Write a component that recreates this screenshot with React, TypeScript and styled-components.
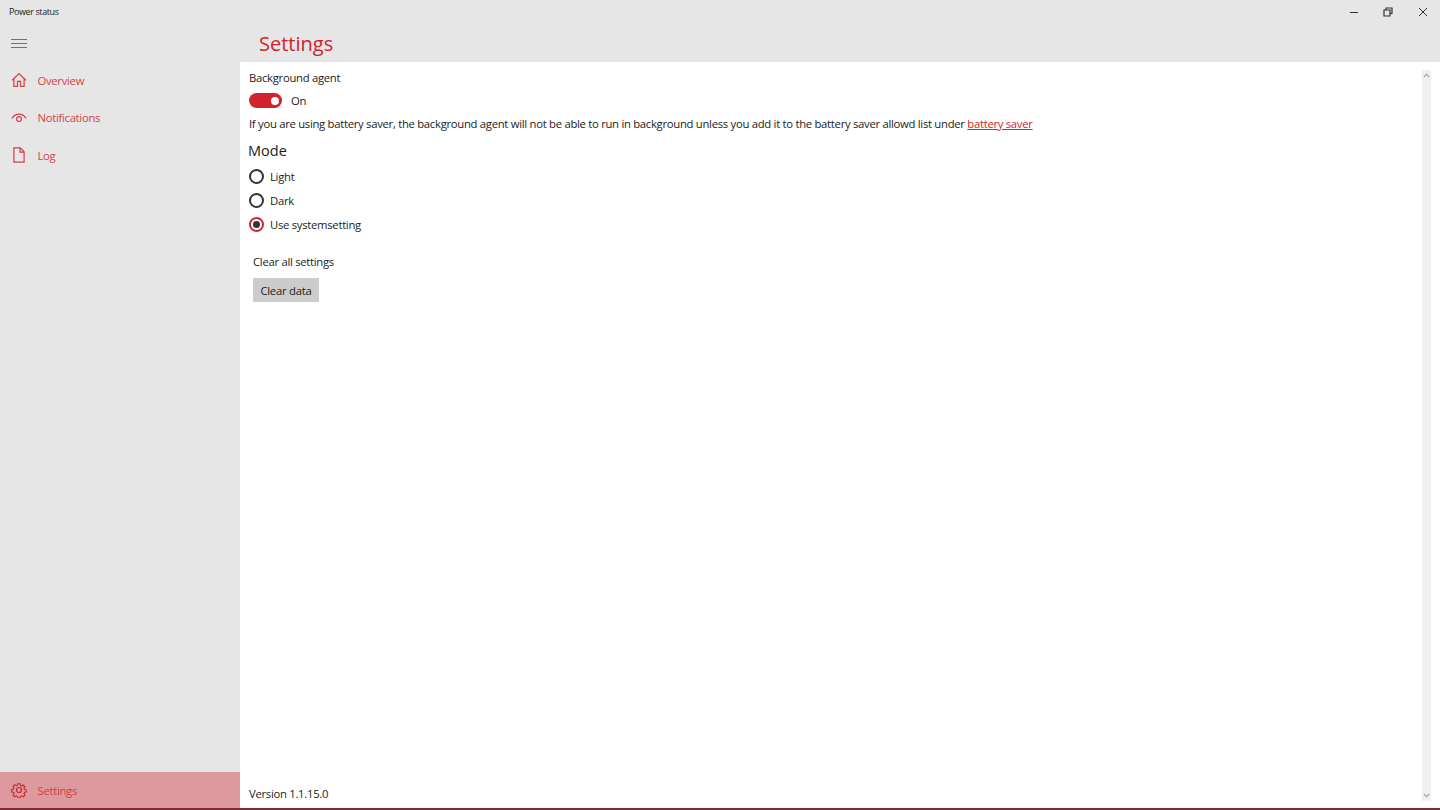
import React from "react";
import styled, { createGlobalStyle } from "styled-components";

const Global = createGlobalStyle`
  html, body { margin: 0; padding: 0; background: #e6e6e6; }
  * { box-sizing: border-box; }
  body { font-family: "Open Sans", "Noto Sans", "Liberation Sans", sans-serif; }
`;

const RED = "#d0232d";

const Shell = styled.div`
  width: 1440px; height: 810px; display: flex; flex-direction: column;
  background: #e6e6e6; overflow: hidden; border-bottom: 2px solid #7d2a33;
`;
const TitleBar = styled.header`
  height: 24px; flex: none; display: flex; align-items: center; justify-content: space-between;
  padding-left: 9px;
`;
const AppName = styled.span` font-size: 9px; color: #222; letter-spacing: -0.4px; margin-top: -1px; `;
const WindowButtons = styled.div` display: flex; `;
const WindowButton = styled.div`
  width: 34.5px; height: 24px; display: flex; align-items: center; justify-content: center;
`;
const Body = styled.div` flex: 1; display: flex; min-height: 0; `;
const Sidebar = styled.nav` width: 240px; flex: none; display: flex; flex-direction: column; `;
const Hamburger = styled.div`
  height: 38px; flex: none; padding: 2px 0 0 11px; display: flex; align-items: center;
`;
const NavItems = styled.div` flex: 1; margin-top: -0.6px; `;
const NavItem = styled.div<{ $selected?: boolean }>`
  height: 37.6px; display: flex; align-items: center; gap: 10.5px; padding-left: 11px;
  color: ${RED}; opacity: 0.85; font-size: 11.3px; letter-spacing: -0.3px;
  ${(p) => p.$selected && "background: #dc9a9e; opacity: 1; height: 36px; color: #d43a43;"}
`;
const Main = styled.main` flex: 1; display: flex; flex-direction: column; min-width: 0; `;
const PageHeader = styled.div` height: 38px; flex: none; padding: 6px 0 0 19px; `;
const PageTitle = styled.h1`
  margin: 0; font-size: 20px; line-height: 28px; font-weight: 400; color: ${RED};
`;
const Content = styled.div`
  flex: 1; background: #fff; display: flex; min-height: 0; padding: 7px 9px 0 9px;
`;
const Column = styled.div` flex: 1; display: flex; flex-direction: column; min-width: 0; `;
const Text = styled.div`
  font-size: 11.3px; line-height: 17px; color: #222; white-space: nowrap; letter-spacing: -0.29px;
`;
const ToggleRow = styled.div` display: flex; align-items: center; gap: 9px; margin-top: 5.5px; height: 18px; `;
const Toggle = styled.div`
  width: 33px; height: 15px; border-radius: 8px; background: ${RED}; display: flex; align-items: center;
  justify-content: flex-end; padding-right: 3.5px;
`;
const Knob = styled.div` width: 8px; height: 8px; border-radius: 50%; background: #fff; `;
const Notice = styled(Text)` margin-top: 5.5px; `;
const BatteryLink = styled.a` color: ${RED}; text-decoration: underline; `;
const SectionTitle = styled.h2`
  margin: 8px 0 0 -1px; font-size: 14.5px; line-height: 22px; font-weight: 400; color: #1c1c1c;
`;
const RadioGroup = styled.div` display: flex; flex-direction: column; margin-top: 2px; `;
const RadioRow = styled.label` height: 24px; display: flex; align-items: center; gap: 6px; `;
const RadioCircle = styled.span<{ $checked?: boolean }>`
  width: 15px; height: 15px; border-radius: 50%; flex: none; display: flex; align-items: center; justify-content: center;
  border: 2px solid ${(p) => (p.$checked ? RED : "#333")};
`;
const RadioDot = styled.span` width: 7px; height: 7px; border-radius: 50%; background: #333; flex: none; `;
const ClearSection = styled.section` margin: 17px 0 0 4px; display: flex; flex-direction: column; align-items: flex-start; `;
const ClearButton = styled.button`
  margin-top: 8px; width: 66px; height: 24px; border: none; padding: 0; background: #cccccc;
  font: inherit; font-size: 11.3px; letter-spacing: -0.24px; color: #222;
`;
const Version = styled(Text)` margin-top: auto; margin-bottom: 6px; `;
const ScrollBar = styled.div`
  width: 9px; flex: none; margin: 1px 0 7px 0; background: #f0f0f0; display: flex; flex-direction: column;
  justify-content: space-between; align-items: center; padding: 3px 0;
`;

const Chevron = ({ down }: { down?: boolean }) => (
  <svg width="7" height="5" viewBox="0 0 7 5" fill="none" stroke="#a8a8a8" strokeWidth="1.3">
    <path d={down ? "M.8 1l2.7 2.6L6.2 1" : "M.8 4l2.7-2.6L6.2 4"} />
  </svg>
);

const iconProps = { width: 16, height: 16, viewBox: "0 0 16 16", fill: "none", stroke: RED, strokeWidth: 1.2 };

const NavIcon = ({ name }: { name: string }) => {
  if (name === "home")
    return (
      <svg {...iconProps}>
        <path d="M1.2 8.3L8 1.6l6.8 6.7M2.9 7v7.4h3.6v-5h3v5h3.6V7" />
      </svg>
    );
  if (name === "eye")
    return (
      <svg {...iconProps}>
        <path d="M.9 8.3C2.7 5.6 5.2 4.2 8 4.2s5.3 1.4 7.1 4.1" />
        <circle cx="8" cy="9.1" r="2.4" />
      </svg>
    );
  if (name === "doc")
    return (
      <svg {...iconProps}>
        <path d="M2.9.8h6.3l3.9 4v10.4H2.9zM9 .9v4.2h4" />
      </svg>
    );
  return (
    <svg {...iconProps}>
      <path d="M6.7 1h2.6l.4 2 1.3.6 1.8-1.1 1.8 1.9-1.1 1.7.6 1.3 2 .4v2.4l-2 .4-.6 1.3 1.1 1.8-1.8 1.8-1.8-1.1-1.3.6-.4 2H6.7l-.4-2-1.3-.6-1.8 1.1-1.8-1.8 1.1-1.8-.6-1.3-2-.4V7.4l2-.4.6-1.3-1.1-1.7 1.8-1.9 1.8 1.1 1.3-.6z" transform="translate(.8 .8) scale(.9)" />
      <circle cx="8" cy="8" r="2.5" />
    </svg>
  );
};

export default function App() {
  return (
    <Shell>
      <Global />
      <TitleBar>
        <AppName>Power status</AppName>
        <WindowButtons>
          <WindowButton>
            <svg width="10" height="10" viewBox="0 0 10 10" stroke="#333" fill="none"><path d="M1 5.5h8" /></svg>
          </WindowButton>
          <WindowButton>
            <svg width="10" height="10" viewBox="0 0 10 10" stroke="#333" strokeWidth="1.2" fill="none"><path d="M3 2.5V1h6v5.5H7.5M1 3h6v6H1z" /></svg>
          </WindowButton>
          <WindowButton>
            <svg width="10" height="10" viewBox="0 0 10 10" stroke="#333" fill="none"><path d="M1 1l8 8M9 1L1 9" /></svg>
          </WindowButton>
        </WindowButtons>
      </TitleBar>
      <Body>
        <Sidebar>
          <Hamburger>
            <svg width="16" height="10" viewBox="0 0 16 10" stroke="#d8474f" fill="none"><path d="M0 .5h16M0 4.5h16M0 8.5h16" /></svg>
          </Hamburger>
          <NavItems>
            <NavItem><NavIcon name="home" />Overview</NavItem>
            <NavItem><NavIcon name="eye" />Notifications</NavItem>
            <NavItem><NavIcon name="doc" />Log</NavItem>
          </NavItems>
          <NavItem $selected><NavIcon name="gear" />Settings</NavItem>
        </Sidebar>
        <Main>
          <PageHeader><PageTitle>Settings</PageTitle></PageHeader>
          <Content>
            <Column>
              <Text>Background agent</Text>
              <ToggleRow>
                <Toggle><Knob /></Toggle>
                <Text>On</Text>
              </ToggleRow>
              <Notice>
                If you are using battery saver, the background agent will not be able to run in background unless you add it to the battery saver allowd list under <BatteryLink>battery saver</BatteryLink>
              </Notice>
              <SectionTitle>Mode</SectionTitle>
              <RadioGroup>
                <RadioRow><RadioCircle /><Text>Light</Text></RadioRow>
                <RadioRow><RadioCircle /><Text>Dark</Text></RadioRow>
                <RadioRow><RadioCircle $checked><RadioDot /></RadioCircle><Text>Use systemsetting</Text></RadioRow>
              </RadioGroup>
              <ClearSection>
                <Text>Clear all settings</Text>
                <ClearButton>Clear data</ClearButton>
              </ClearSection>
              <Version>Version 1.1.15.0</Version>
            </Column>
            <ScrollBar>
              <Chevron />
              <Chevron down />
            </ScrollBar>
          </Content>
        </Main>
      </Body>
    </Shell>
  );
}
